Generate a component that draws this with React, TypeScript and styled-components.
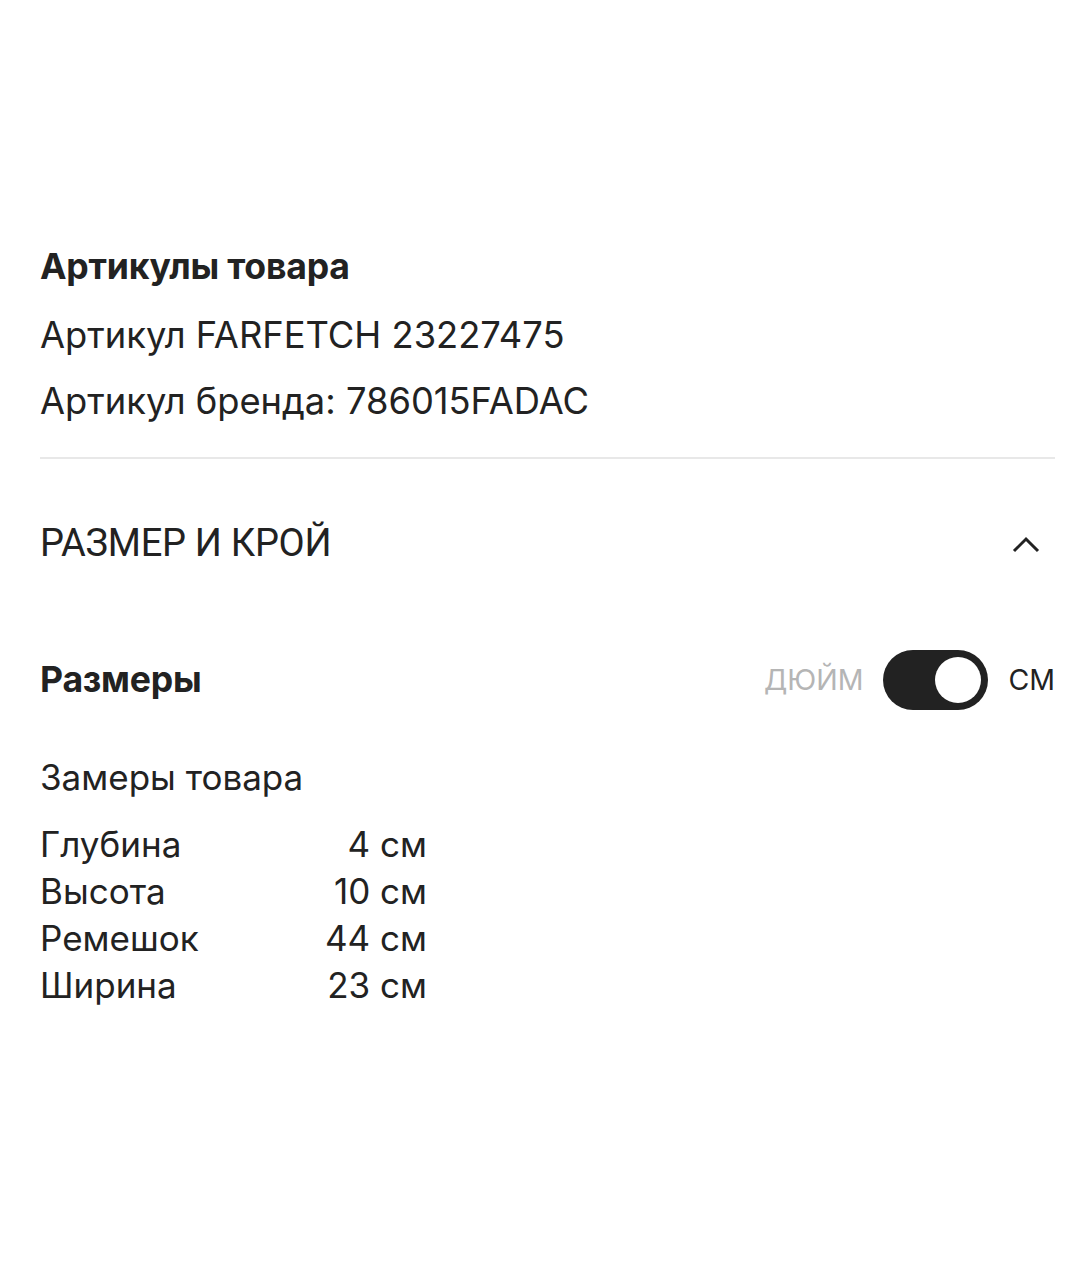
import React, { FunctionComponent, useState } from 'react';
import styled, { createGlobalStyle } from 'styled-components';

const GlobalStyle = createGlobalStyle`
  html, body {
    margin: 0;
    padding: 0;
    background: #ffffff;
  }
  body {
    font-family: Inter, "Liberation Sans", sans-serif;
    color: #222222;
  }
`;

const Page = styled.div`
  width: 1080px;
  min-height: 1280px;
  box-sizing: border-box;
  padding: 244px 25px 0 40px;
`;

const Section = styled.section`
  padding-bottom: 33px;
  border-bottom: 2px solid #e8e8e8;
`;

const Title = styled.h3`
  margin: 0 0 22px;
  font-size: 35.6px;
  line-height: 46px;
  font-weight: 700;
  letter-spacing: -0.2px;
`;

const Line = styled.p`
  margin: 0 0 20px;
  font-size: 36.3px;
  line-height: 46px;
  font-weight: 400;
  &:last-child {
    margin-bottom: 0;
  }
`;

const AccordionHeading = styled.div`
  display: flex;
  align-items: center;
  justify-content: space-between;
  margin-top: 61px;
  cursor: pointer;
`;

const AccordionTitle = styled.span`
  font-family: "Liberation Sans Narrow", Roboto, sans-serif;
  font-size: 38px;
  line-height: 46px;
  font-weight: 400;
  letter-spacing: -0.3px;
`;

const Chevron = styled.svg`
  width: 30px;
  height: 20px;
  margin-right: 14px;
  margin-top: 2px;
`;

const SizesHeader = styled.div`
  display: flex;
  align-items: center;
  justify-content: space-between;
  margin-top: 84px;
`;

const SizesTitle = styled(Title)`
  margin: 0;
`;

const UnitSwitch = styled.div`
  display: flex;
  align-items: center;
  gap: 20px;
`;

const UnitLabel = styled.span<{ active: boolean }>`
  font-size: 28.5px;
  line-height: 40px;
  color: ${({ active }) => (active ? '#222222' : '#b5b5b5')};
`;

const Toggle = styled.button<{ on: boolean }>`
  position: relative;
  width: 105px;
  height: 60px;
  padding: 0;
  border: none;
  border-radius: 30px;
  background: ${({ on }) => (on ? '#222222' : '#d0d0d0')};
  cursor: pointer;

  &::after {
    content: '';
    position: absolute;
    top: 7px;
    left: ${({ on }) => (on ? '52px' : '7px')};
    width: 46px;
    height: 46px;
    border-radius: 50%;
    background: #ffffff;
  }
`;

const Subtitle = styled.p`
  margin: 44px 0 21px;
  font-size: 35px;
  line-height: 46px;
`;

const MeasureTable = styled.div`
  display: grid;
  grid-template-columns: 230px 157px;
  grid-auto-rows: 47px;
  align-items: center;
  margin-top: 1px;
`;

const MeasureLabel = styled.span`
  font-size: 35px;
  line-height: 47px;
`;

const MeasureValue = styled.span`
  font-size: 35px;
  line-height: 47px;
  text-align: right;
`;

const measures = [
  { label: 'Глубина', value: '4 см' },
  { label: 'Высота', value: '10 см' },
  { label: 'Ремешок', value: '44 см' },
  { label: 'Ширина', value: '23 см' },
];

const App: FunctionComponent = () => {
  const [metric, setMetric] = useState<boolean>(true);

  return (
    <Page>
      <GlobalStyle />
      <Section>
        <Title>Артикулы товара</Title>
        <Line>Артикул FARFETCH 23227475</Line>
        <Line>Артикул бренда: 786015FADAC</Line>
      </Section>

      <AccordionHeading>
        <AccordionTitle>РАЗМЕР И КРОЙ</AccordionTitle>
        <Chevron viewBox="0 0 30 20">
          <path d="M3 17 L15 5 L27 17" fill="none" stroke="#222" strokeWidth="3" />
        </Chevron>
      </AccordionHeading>

      <SizesHeader>
        <SizesTitle as="h4">Размеры</SizesTitle>
        <UnitSwitch>
          <UnitLabel active={!metric}>ДЮЙМ</UnitLabel>
          <Toggle on={metric} onClick={() => setMetric(value => !value)} />
          <UnitLabel active={metric}>СМ</UnitLabel>
        </UnitSwitch>
      </SizesHeader>

      <Subtitle>Замеры товара</Subtitle>
      <MeasureTable>
        {measures.map(item => (
          <React.Fragment key={item.label}>
            <MeasureLabel>{item.label}</MeasureLabel>
            <MeasureValue>{item.value}</MeasureValue>
          </React.Fragment>
        ))}
      </MeasureTable>
    </Page>
  );
};

export default App;
